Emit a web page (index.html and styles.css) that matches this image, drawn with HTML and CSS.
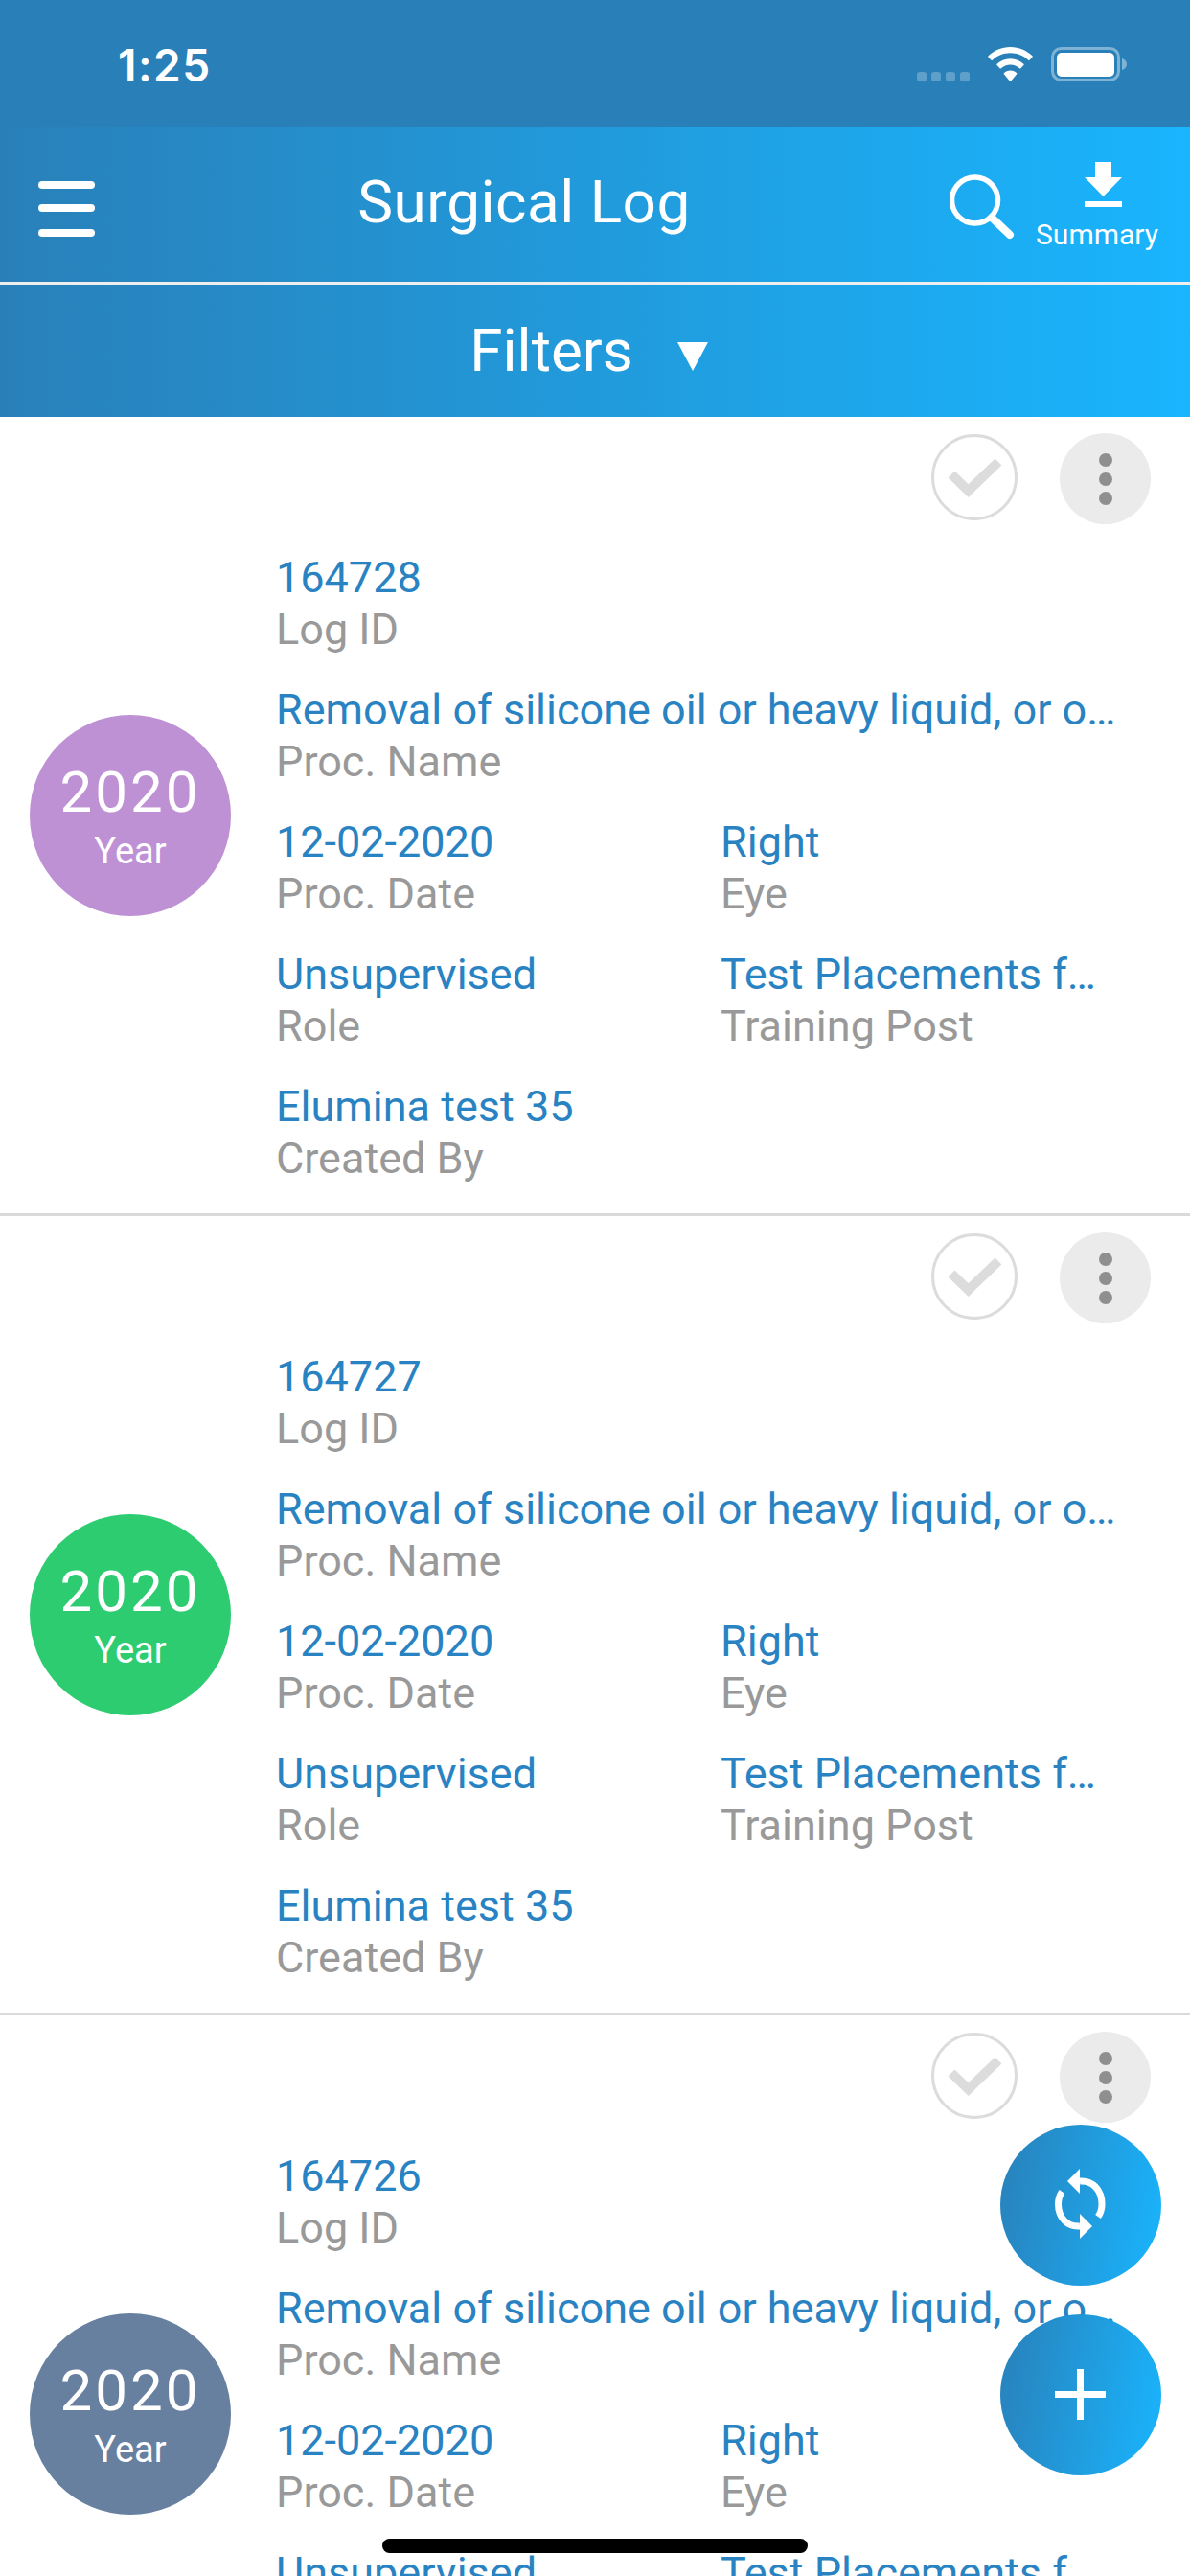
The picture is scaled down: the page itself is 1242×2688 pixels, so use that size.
FILE: index.html
```html
<!DOCTYPE html>
<html lang="en">
<head>
<meta charset="utf-8">
<title>Surgical Log</title>
<link rel="stylesheet" href="styles.css">
</head>
<body>
<div class="screen">
  <header class="top">
    <div class="status">
      <span class="time">1:25</span>
      <div class="status-icons">
        <div class="signal"><i></i><i></i><i></i><i></i></div>
        <svg class="wifi" width="47" height="36" viewBox="0 0 47 36"><path fill="#fff" d="M23.5 0C14.6 0 6.6 3.5.5 9.3c-.4.4-.4.9 0 1.3l3 3.1c.4.4.9.4 1.3 0C9.700 9 16.300 6.300 23.500 6.300S37.300 9 42.200 13.700c.4.4.9.4 1.300 0l3-3.100c.4-.4.4-.9 0-1.300C40.400 3.500 32.400 0 23.500 0z"/><path fill="#fff" d="M23.500 12.300c-5.400 0-10.300 2.100-13.900 5.500-.4.4-.4.9 0 1.300l3 3.100c.4.4.9.4 1.300 0 2.500-2.300 5.900-3.700 9.600-3.700s7.100 1.400 9.600 3.700c.4.4.9.4 1.300 0l3-3.100c.4-.4.4-.9 0-1.300-3.600-3.400-8.500-5.500-13.900-5.500z"/><path fill="#fff" d="M23.500 24.500c-2.600 0-5 1-6.700 2.700-.3.300-.3.800 0 1.100l6 7.200c.4.400 1 .4 1.400 0l6-7.200c.3-.3.3-.8 0-1.100-1.700-1.700-4.100-2.700-6.700-2.700z"/></svg>
        <svg class="battery" width="80" height="36" viewBox="0 0 80 36"><rect x="1.500" y="1.500" width="69" height="33" rx="9" fill="none" stroke="#fff" stroke-opacity=".4" stroke-width="3"/><rect x="6" y="6" width="60" height="25" rx="5" fill="#fff"/><path d="M74 12c3 .8 5 3 5 6s-2 5.200-5 6z" fill="#fff" fill-opacity=".4"/></svg>
      </div>
    </div>
    <div class="navbar">
      <svg class="menu" width="59" height="58" viewBox="0 0 59 58"><rect width="59" height="8" rx="4" fill="#fff"/><rect y="24" width="59" height="8" rx="4" fill="#fff"/><rect y="50" width="59" height="8" rx="4" fill="#fff"/></svg>
      <h1 class="title">Surgical Log</h1>
      <svg class="search" width="70" height="68" viewBox="0 0 70 68"><circle cx="26.500" cy="27" r="24" fill="none" stroke="#fff" stroke-width="5.500"/><path d="M44 45l19 18" stroke="#fff" stroke-width="8" stroke-linecap="round"/></svg>
      <div class="summary">
        <svg width="39" height="47" viewBox="0 0 39 47"><path fill="#fff" d="M11 0h17v16h11L19.500 36 0 16h11z"/><rect y="41" width="39" height="6" fill="#fff"/></svg>
        <span>Summary</span>
      </div>
    </div>
    <div class="filters">
      <span>Filters</span>
      <svg width="32" height="30" viewBox="0 0 32 30"><path fill="#fff" d="M0 0h32L16 30z"/></svg>
    </div>
  </header>

  <main class="list">
    <article class="card">
      <div class="actions">
        <svg class="check" width="90" height="90" viewBox="0 0 90 90"><circle cx="45" cy="45" r="43.500" fill="#fff" stroke="#dcdcdc" stroke-width="3"/><path d="M21 42l17.700 17L70 29" fill="none" stroke="#dcdcdc" stroke-width="10"/></svg>
        <div class="more"><i></i><i></i><i></i></div>
      </div>
      <div class="body">
        <div class="avatar purple"><b>2020</b><span>Year</span></div>
        <div class="fields">
          <div class="field wide"><p class="value">164728</p><p class="label">Log ID</p></div>
          <div class="field wide"><p class="value">Removal of silicone oil or heavy liquid, or other substances</p><p class="label">Proc. Name</p></div>
          <div class="field"><p class="value">12-02-2020</p><p class="label">Proc. Date</p></div>
          <div class="field"><p class="value">Right</p><p class="label">Eye</p></div>
          <div class="field"><p class="value">Unsupervised</p><p class="label">Role</p></div>
          <div class="field"><p class="value">Test Placements for Trainees</p><p class="label">Training Post</p></div>
          <div class="field wide"><p class="value">Elumina test 35</p><p class="label">Created By</p></div>
        </div>
      </div>
    </article>
    <article class="card">
      <div class="actions">
        <svg class="check" width="90" height="90" viewBox="0 0 90 90"><circle cx="45" cy="45" r="43.500" fill="#fff" stroke="#dcdcdc" stroke-width="3"/><path d="M21 42l17.700 17L70 29" fill="none" stroke="#dcdcdc" stroke-width="10"/></svg>
        <div class="more"><i></i><i></i><i></i></div>
      </div>
      <div class="body">
        <div class="avatar green"><b>2020</b><span>Year</span></div>
        <div class="fields">
          <div class="field wide"><p class="value">164727</p><p class="label">Log ID</p></div>
          <div class="field wide"><p class="value">Removal of silicone oil or heavy liquid, or other substances</p><p class="label">Proc. Name</p></div>
          <div class="field"><p class="value">12-02-2020</p><p class="label">Proc. Date</p></div>
          <div class="field"><p class="value">Right</p><p class="label">Eye</p></div>
          <div class="field"><p class="value">Unsupervised</p><p class="label">Role</p></div>
          <div class="field"><p class="value">Test Placements for Trainees</p><p class="label">Training Post</p></div>
          <div class="field wide"><p class="value">Elumina test 35</p><p class="label">Created By</p></div>
        </div>
      </div>
    </article>
    <article class="card">
      <div class="actions">
        <svg class="check" width="90" height="90" viewBox="0 0 90 90"><circle cx="45" cy="45" r="43.500" fill="#fff" stroke="#dcdcdc" stroke-width="3"/><path d="M21 42l17.700 17L70 29" fill="none" stroke="#dcdcdc" stroke-width="10"/></svg>
        <div class="more"><i></i><i></i><i></i></div>
      </div>
      <div class="body">
        <div class="avatar slate"><b>2020</b><span>Year</span></div>
        <div class="fields">
          <div class="field wide"><p class="value">164726</p><p class="label">Log ID</p></div>
          <div class="field wide"><p class="value">Removal of silicone oil or heavy liquid, or other substances</p><p class="label">Proc. Name</p></div>
          <div class="field"><p class="value">12-02-2020</p><p class="label">Proc. Date</p></div>
          <div class="field"><p class="value">Right</p><p class="label">Eye</p></div>
          <div class="field"><p class="value">Unsupervised</p><p class="label">Role</p></div>
          <div class="field"><p class="value">Test Placements for Trainees</p><p class="label">Training Post</p></div>
          <div class="field wide"><p class="value">Elumina test 35</p><p class="label">Created By</p></div>
        </div>
      </div>
    </article>
  </main>

  <button class="fab fab-sync" type="button" aria-label="Sync">
    <svg width="53" height="74" viewBox="0 0 53 74"><path fill="none" stroke="#fff" stroke-width="7" d="M26 13c13-1 23 9 23 24 0 5-1 9-4 13"/><path fill="#fff" d="M26 0v26L13 13z"/><path fill="none" stroke="#fff" stroke-width="7" d="M26 60C13 61 3.500 51 3.500 37c0-5 1-9 4-13"/><path fill="#fff" d="M26 47v26l13-13z"/></svg>
  </button>
  <button class="fab fab-add" type="button" aria-label="Add">
    <svg width="53" height="53" viewBox="0 0 53 53"><path fill="#fff" d="M23 0h7v23h23v7H30v23h-7V30H0v-7h23z"/></svg>
  </button>
  <div class="home-indicator"></div>
</div>
</body>
</html>
```

FILE: styles.css
```css
* { box-sizing: border-box; }
html, body { margin: 0; padding: 0; }
body { font-family: Roboto, "Liberation Sans", sans-serif; background: #fff; }
.screen { position: relative; width: 1242px; height: 2688px; overflow: hidden; background: #fff; }

.status { height: 132px; background: #2980b9; display: flex; align-items: flex-start; justify-content: space-between; padding: 49px 65px 0 123px; }
.time { font-family: Inter, "Liberation Sans", sans-serif; color: #fff; font-size: 46px; line-height: 38px; font-weight: 600; letter-spacing: 1.5px; }
.status-icons { display: flex; align-items: flex-start; }
.signal { display: flex; gap: 5px; margin-top: 26px; margin-right: 19px; }
.signal i { width: 10px; height: 10px; border-radius: 3px; background: rgba(255,255,255,.25); }
.wifi { margin-right: 19px; }

.navbar { position: relative; height: 162px; background: linear-gradient(90deg, #2980b9, #19b5fe); }
.menu { position: absolute; left: 40px; top: 57px; }
.title { position: absolute; left: 0; width: 1094px; top: 39px; margin: 0; text-align: center; color: #fff; font-size: 62px; line-height: 80px; font-weight: 400; letter-spacing: .5px; }
.search { position: absolute; left: 991px; top: 50px; }
.summary { position: absolute; left: 1070px; top: 37px; width: 150px; display: flex; flex-direction: column; align-items: center; color: #fff; font-size: 30px; line-height: 40px; }
.summary svg { margin-left: 12px; }
.summary span { margin-top: 9px; }

.filters { height: 141px; border-top: 3px solid #eee; background: linear-gradient(90deg, #2980b9, #19b5fe); display: flex; align-items: center; justify-content: center; gap: 46px; color: #fff; font-size: 62px; padding: 0 13px 2px 0; }
.filters svg { margin-top: 14px; }

.card { height: 834px; border-bottom: 3px solid #dadada; }
.actions { height: 140px; padding: 17px 41px 0 0; display: flex; align-items: flex-start; justify-content: flex-end; gap: 44px; }
.check { margin-top: 1px; }
.more { width: 95px; height: 95px; border-radius: 50%; background: #ebebeb; display: flex; flex-direction: column; align-items: center; justify-content: center; gap: 6px; }
.more i { width: 14px; height: 14px; border-radius: 50%; background: #8f8f8f; }

.body { display: flex; align-items: flex-start; padding-left: 31px; }
.avatar { flex: none; width: 210px; height: 210px; margin-top: 171px; margin-right: 47px; border-radius: 50%; display: flex; flex-direction: column; align-items: center; justify-content: center; color: #fff; }
.avatar b { font-size: 60px; line-height: 70px; font-weight: 400; letter-spacing: 3px; }
.avatar span { font-size: 38px; line-height: 46px; margin-top: 3px; }
.purple { background: #be90d4; }
.green { background: #2ecc71; }
.slate { background: #67809f; }

.fields { width: 880px; margin-top: 1px; display: grid; grid-template-columns: 464px 416px; row-gap: 30px; font-size: 45px; line-height: 54px; }
.field { min-width: 0; padding-right: 16px; }
.wide { grid-column: 1 / -1; padding-right: 0; }
.value, .label { margin: 0; white-space: nowrap; overflow: hidden; text-overflow: ellipsis; }
.value { color: #2983c2; }
.label { color: #999; }

.fab { position: absolute; left: 1044px; width: 168px; height: 168px; padding: 0; border: 0; border-radius: 50%; background: linear-gradient(100deg, #2980b9, #19b5fe); display: flex; align-items: center; justify-content: center; }
.fab-sync { top: 2217px; }
.fab-sync svg { margin: 0 1px 3px 0; }
.fab-add { top: 2415px; }
.fab-add svg { margin: 0 1px 2px 0; }

.home-indicator { position: absolute; left: 399px; top: 2649px; width: 444px; height: 15px; border-radius: 8px; background: #000; }
```
